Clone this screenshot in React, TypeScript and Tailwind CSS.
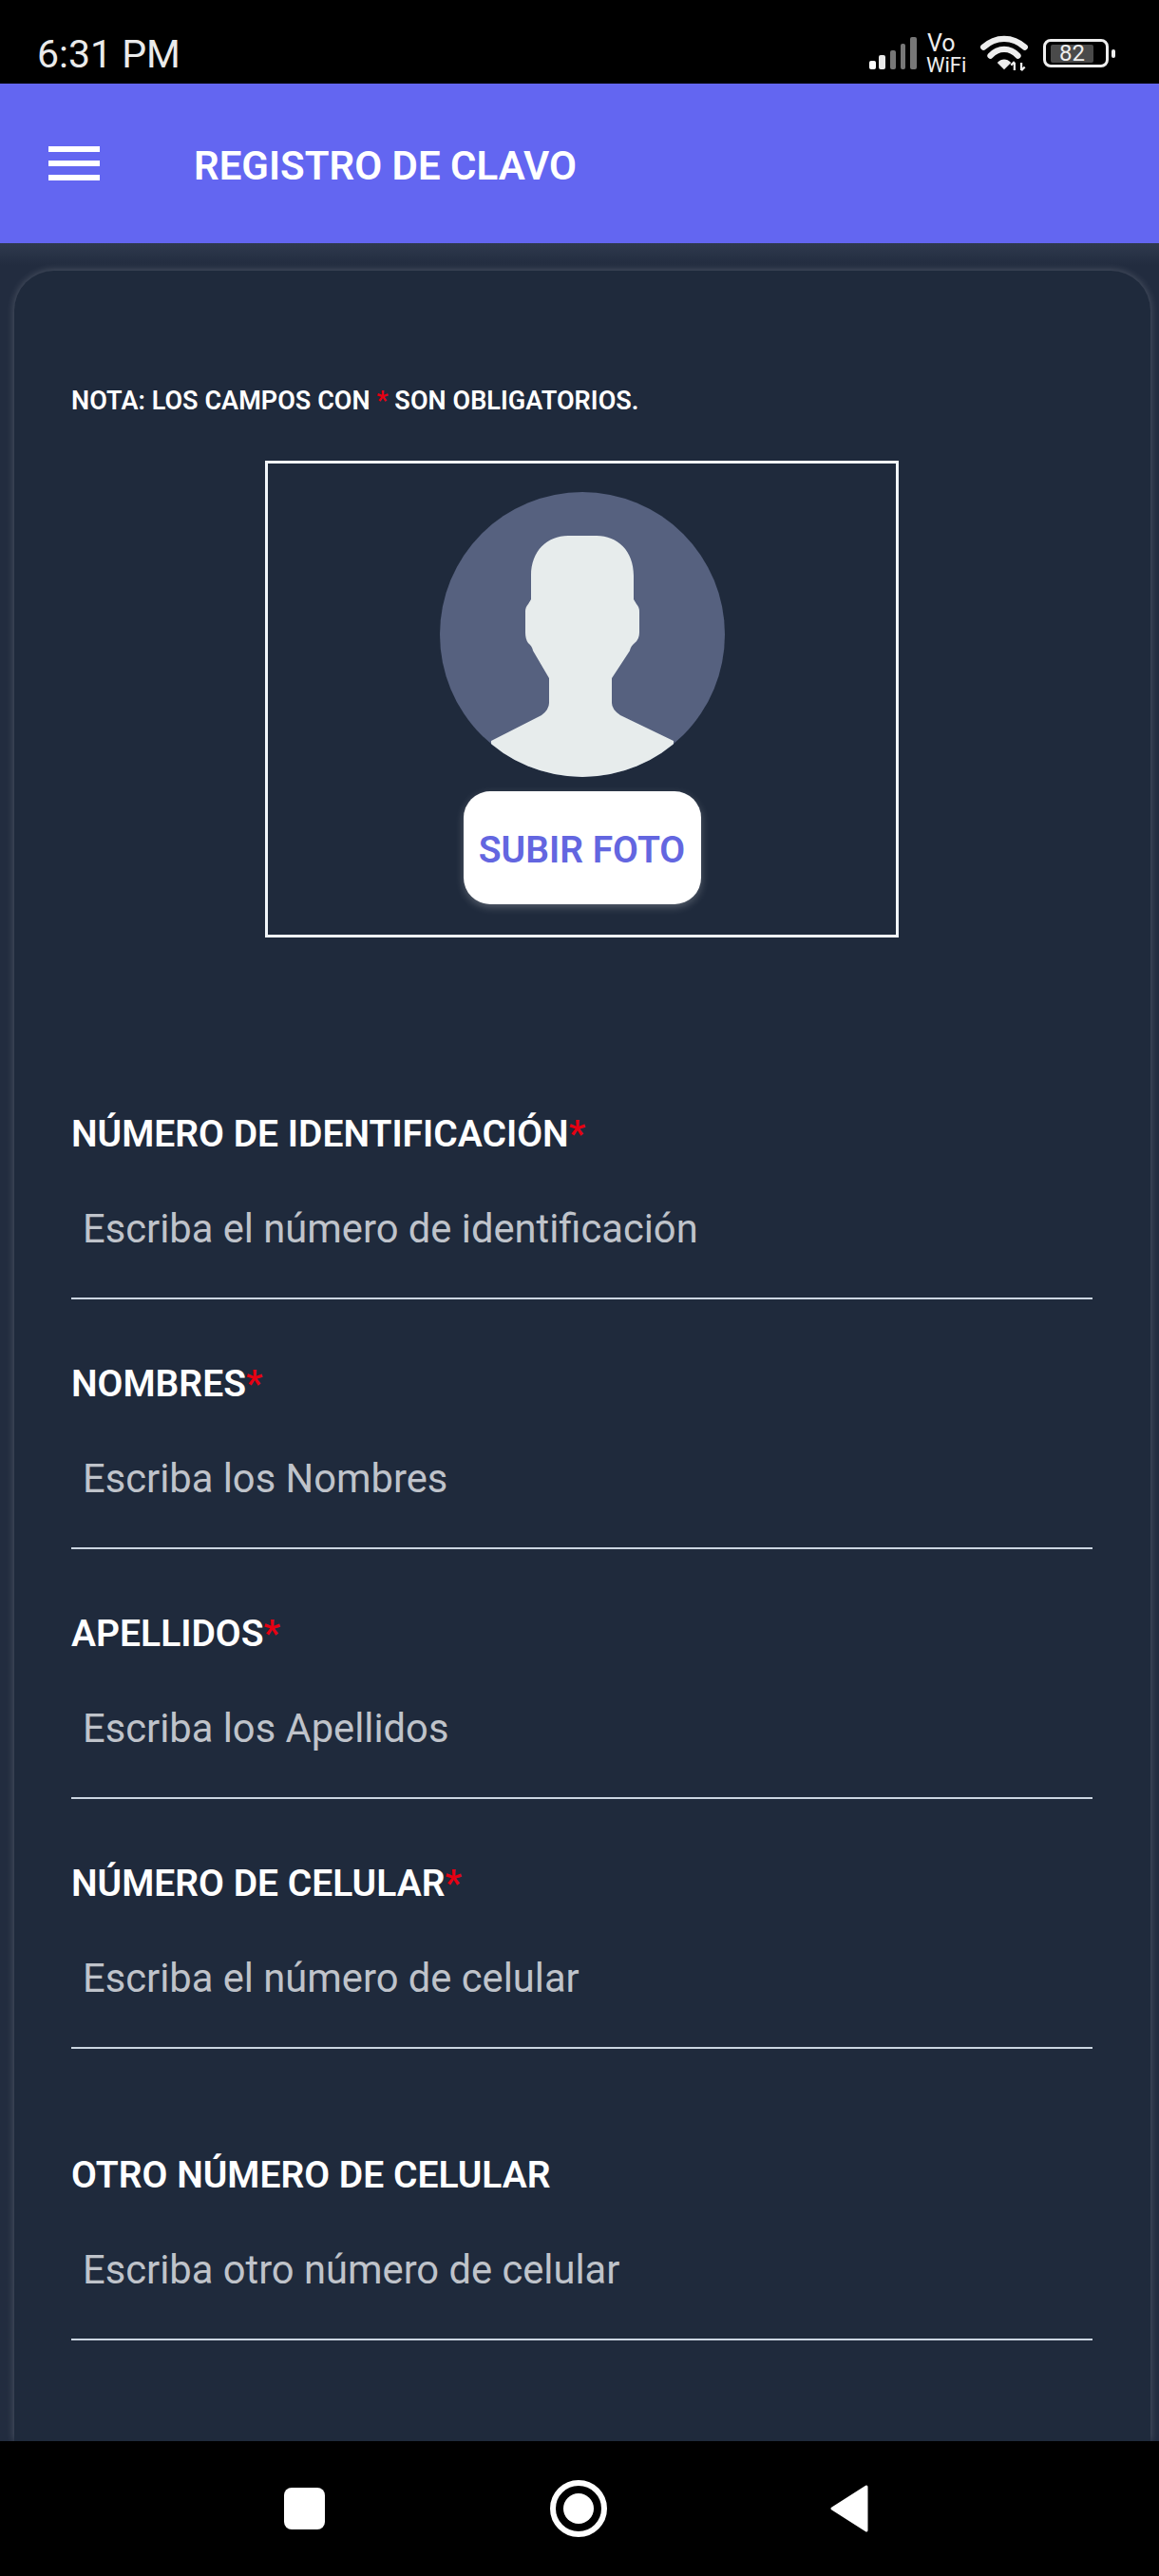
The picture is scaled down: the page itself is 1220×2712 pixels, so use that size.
import React from "react";

const fields = [
  { label: "NÚMERO DE IDENTIFICACIÓN", required: true, placeholder: "Escriba el número de identificación" },
  { label: "NOMBRES", required: true, placeholder: "Escriba los Nombres" },
  { label: "APELLIDOS", required: true, placeholder: "Escriba los Apellidos" },
  { label: "NÚMERO DE CELULAR", required: true, placeholder: "Escriba el número de celular" },
  { label: "OTRO NÚMERO DE CELULAR", required: false, placeholder: "Escriba otro número de celular", extra: true },
];

function Avatar() {
  return (
    <svg width="300" height="300" viewBox="0 0 300 300" className="block">
      <defs>
        <clipPath id="c">
          <circle cx="150" cy="150" r="150" />
        </clipPath>
      </defs>
      <g clipPath="url(#c)">
        <rect width="300" height="300" fill="#56617f" />
        <path
          d="M96 88C96 62 113 46 135 46H165C187 46 204 62 204 88V113L207 118Q210 121 210 126V148Q210 155 205 159Q201 162 200 167L181 196V222Q181 229 190 235L246 262V300H54V262L107 235Q115 229 115 222V196L98 167Q97 162 93 159Q90 155 90 148V126Q90 121 93 118L96 113Z"
          fill="#e7ecec"
        />
      </g>
    </svg>
  );
}

function StatusIcons() {
  return (
    <div className="flex items-center">
      <svg width="53" height="36" viewBox="0 0 53 36" className="block">
        <rect x="2" y="26" width="7" height="9" rx="2" fill="#fff" />
        <rect x="12" y="20" width="7" height="15" rx="2" fill="#e8e8e8" />
        <rect x="24" y="15" width="6" height="20" rx="2" fill="#777" />
        <rect x="35" y="8" width="5" height="27" rx="2" fill="#777" />
        <rect x="45" y="1" width="7" height="34" rx="2" fill="#777" />
      </svg>
      <div className="ml-[9px] flex w-[46px] flex-col font-['Roboto',sans-serif] text-[25px] leading-[25px] text-[#eee]">
        <span className="pl-[1px]">Vo</span>
        <span className="text-[22px] leading-[22px]">WiFi</span>
      </div>
      <svg width="50" height="38" viewBox="0 0 54 42" className="ml-[11px] block">
        <path d="M3 14C17 1 37 1 51 14" fill="none" stroke="#eee" strokeWidth="7" strokeLinecap="round" />
        <path d="M11 24C20 14 34 14 43 24" fill="none" stroke="#eee" strokeWidth="7" strokeLinecap="round" />
        <path d="M19 32C24 27 30 27 35 32L27 40Z" fill="#eee" />
        <path d="M39 41V32M35 35L39 31M47 32V41M47 41L51 37" stroke="#eee" strokeWidth="2.5" fill="none" />
      </svg>
      <div className="ml-[16px] flex h-[30px] w-[69px] items-center rounded-[8px] border-[3px] border-[#eee] pl-[5px]">
        <div className="flex h-[19px] w-[45px] items-center justify-center rounded-[2px] bg-[#4a4a4a] font-['Roboto',sans-serif] text-[24px] leading-none text-[#eee]">
          82
        </div>
      </div>
      <div className="ml-[3px] h-[9px] w-[4px] rounded-[2px] bg-[#eee]" />
    </div>
  );
}

export default function App() {
  return (
    <div className="flex h-[2712px] w-[1220px] flex-col overflow-hidden bg-[#243044] font-['Roboto',sans-serif]">
      <div className="flex h-[88px] shrink-0 items-center justify-between bg-black pl-[39px] pr-[46px] pt-[24px]">
        <span className="mt-[2px] text-[41px] leading-none text-[#eaeaea]">6:31 PM</span>
        <StatusIcons />
      </div>

      <div className="flex h-[168px] shrink-0 items-center bg-[#6366f1] pl-[51px]">
        <div className="flex w-[54px] flex-col gap-[9px]">
          <div className="h-[6px] bg-white" />
          <div className="h-[6px] bg-white" />
          <div className="h-[6px] bg-white" />
        </div>
        <span className="ml-[99px] mt-[5px] text-[42px] font-semibold leading-none text-white">REGISTRO DE CLAVO</span>
      </div>

      <div className="flex min-h-0 flex-1 flex-col overflow-hidden bg-gradient-to-b from-[#2f3a4e] to-[#222c3f] to-[1%] pl-[15px] pr-[9px] pt-[29px]">
        <div className="flex-1 rounded-t-[42px] bg-[#1f2a3c] pl-[60px] pr-[61px] pt-[117px] shadow-[0_0_8px_rgba(255,255,255,0.22)]">
          <p className="text-[27px] font-semibold leading-[40px] tracking-[0.05px] text-white">
            NOTA: LOS CAMPOS CON <span className="text-[#e60012]">*</span> SON OBLIGATORIOS.
          </p>

          <div className="mx-auto mt-[43px] flex h-[502px] w-[667px] flex-col items-center border-[3px] border-[#f1f5f9] pt-[30px]">
            <Avatar />
            <button className="mt-[15px] flex h-[119px] w-[250px] items-center justify-center rounded-[28px] bg-white pt-[5px] text-[39px] font-semibold text-[#6366e0] shadow-[0_3px_8px_rgba(255,255,255,0.25)]">
              SUBIR FOTO
            </button>
          </div>

          <div className="mt-[187px] flex flex-col">
            {fields.map((f) => (
              <div key={f.label} className={f.extra ? "mt-[44px]" : ""}>
                <div className="-mt-[2px] mb-[2px] h-[44px] text-[39px] font-semibold leading-[44px] text-white">
                  {f.label}
                  {f.required && <span className="text-[#e60012]">*</span>}
                </div>
                <div className="flex h-[150px] items-center border-b-2 border-[#cbd5e1] pl-[12px] pt-[4px] text-[41.7px] leading-none text-[#bfc3ca]">
                  {f.placeholder}
                </div>
                <div className="h-[69px]" />
              </div>
            ))}
          </div>
        </div>
      </div>

      <div className="flex h-[142px] shrink-0 items-center justify-center bg-black pr-[7px]">
        <div className="h-[44px] w-[43px] rounded-[8px] bg-white" />
        <svg width="60" height="60" viewBox="0 0 60 60" className="ml-[237px] block">
          <circle cx="30" cy="30" r="27" fill="none" stroke="#fff" strokeWidth="6" />
          <circle cx="30" cy="30" r="16" fill="#fff" />
        </svg>
        <svg width="40" height="50" viewBox="0 0 40 50" className="ml-[235px] block">
          <path d="M38 2V48L2 25Z" fill="#fff" stroke="#fff" strokeWidth="3" strokeLinejoin="round" />
        </svg>
      </div>
    </div>
  );
}
